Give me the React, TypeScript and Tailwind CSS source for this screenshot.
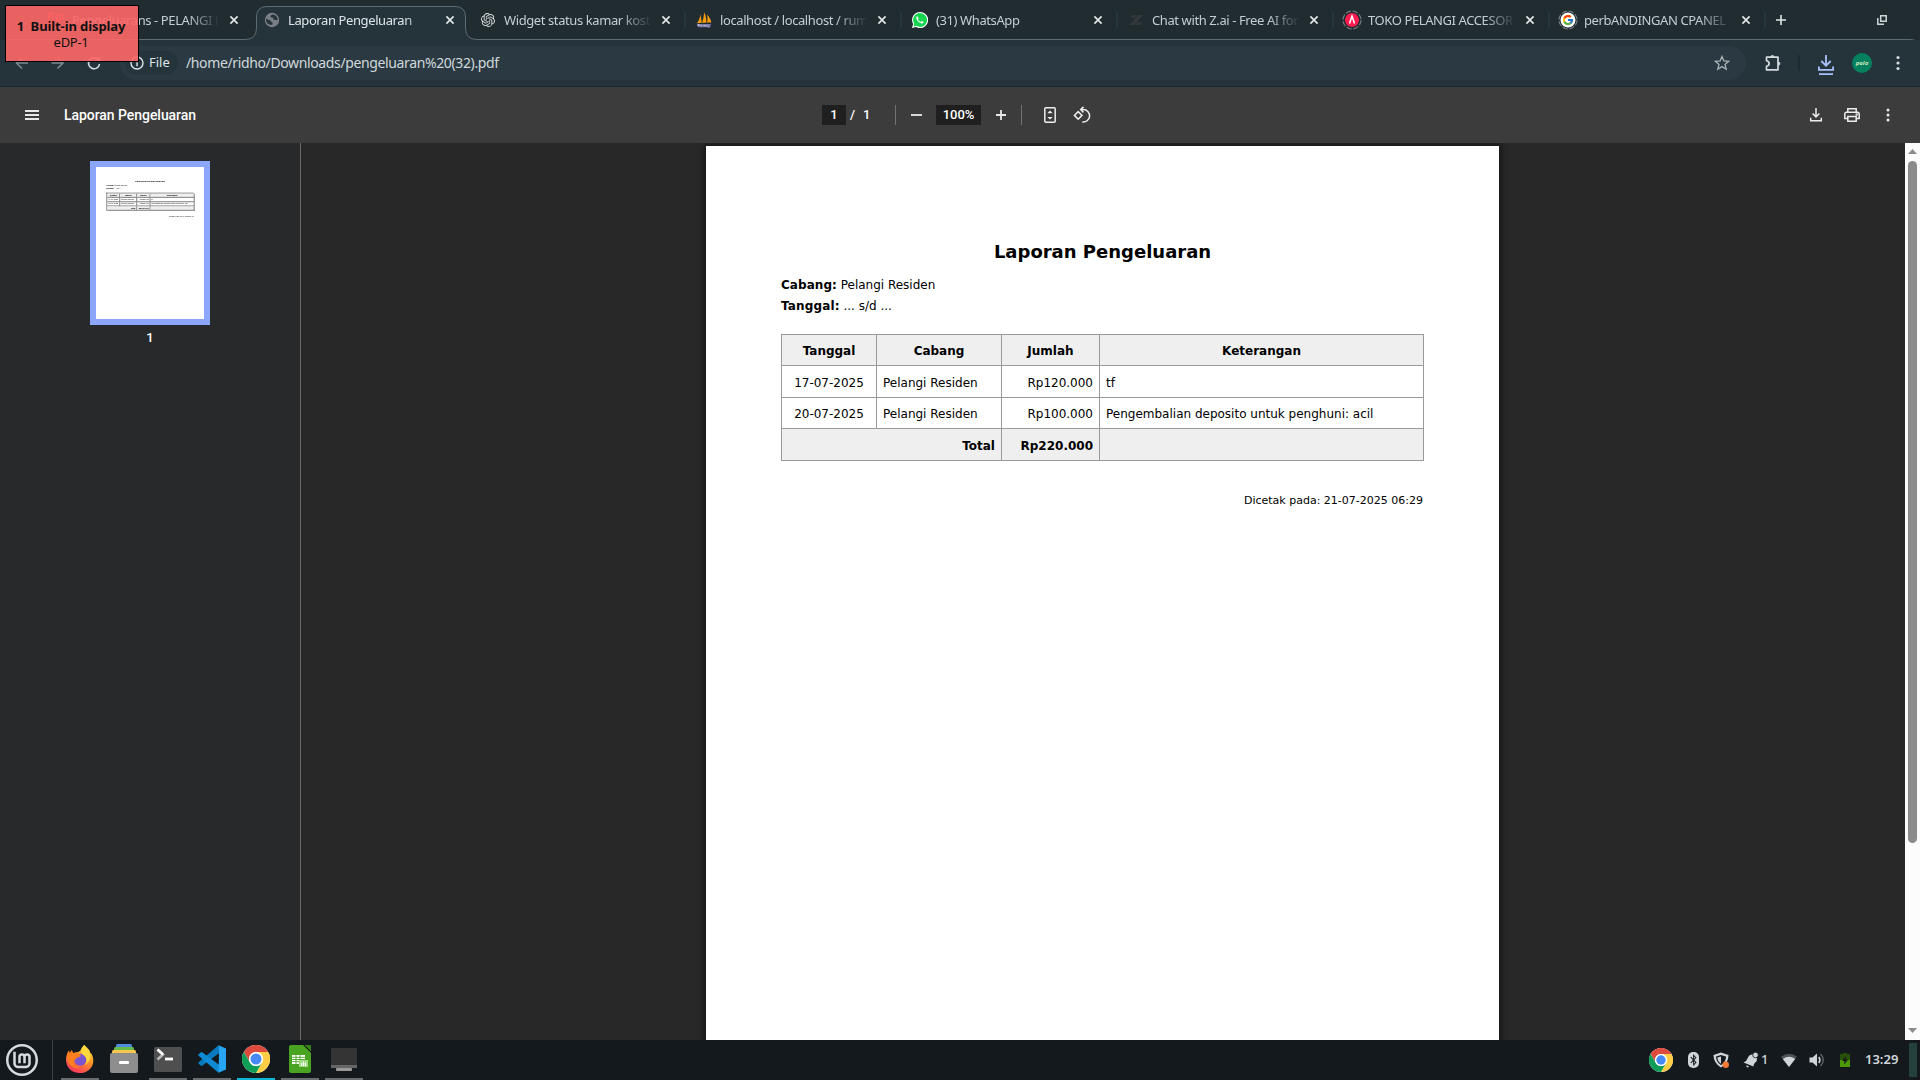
import React from "react";
import { SiLinuxmint, SiOpenai } from "react-icons/si";
import { FcGoogle } from "react-icons/fc";
import { FaBluetoothB } from "react-icons/fa";

type IconProps = { className?: string };

/* ---------- shared drawings ---------- */

function ChromeLogo({ className }: IconProps) {
  return (
    <svg viewBox="0 0 48 48" className={className}>
      <circle cx="24" cy="24" r="24" fill="#fff" />
      <path d="M3.2 12A24 24 0 0 1 44.8 12H24A12 12 0 0 0 13.6 30Z" fill="#dd4b3e" />
      <path d="M44.8 12A24 24 0 0 1 24 48L34.4 30A12 12 0 0 0 24 12Z" fill="#ffce44" />
      <path d="M24 48A24 24 0 0 1 3.2 12L13.6 30A12 12 0 0 0 34.4 30Z" fill="#109d58" />
      <circle cx="24" cy="24" r="12" fill="#fff" />
      <circle cx="24" cy="24" r="9.4" fill="#4688f4" />
    </svg>
  );
}

function CloseIcon({ className }: IconProps) {
  return (
    <svg viewBox="0 0 10 10" className={className} fill="none" stroke="currentColor" strokeWidth="1.7">
      <path d="M1.4 1.4L8.6 8.6M8.6 1.4L1.4 8.6" />
    </svg>
  );
}

/* ---------- tab favicons ---------- */

const GlobeIcon = () => (
  <svg viewBox="0 0 16 16" className="size-4">
    <circle cx="8" cy="8" r="7.2" fill="#7a7f85" />
    <path
      d="M2 6.2C3.4 8 5 7.7 6 8.2s.9 1.7 2 2 .6 1.6.3 2.6C5 13.3 2.300 11 2 8ZM8 2.600c-.4 1-1.700 1-1.500 2.100s1.900.6 2.600 1.200c.7.600 0 1.700 1.100 2.100 1 .4 2-.4 3.300.3C13.900 5 11.600 2.500 8 2.600Z"
      fill="#26343a"
    />
  </svg>
);
const SailIcon = () => (
  <svg viewBox="0 0 16 16" className="size-4">
    <path d="M.8 11.200C2.800 9 4 6 4.400 2.200l1.400 8.600ZM6 10.800C7.400 7 8 4 8 .3c2 3.500 2.400 7 2.300 10.400ZM11 10.600c.7-2.800.6-5.200 0-8 2.200 2 3.900 5 4.300 8Z" fill="#f89c0e" />
    <path d="M.6 12h14.600l-1 3.200H2Z" fill="#6c6a9c" />
    <path d="M2 14V12.600h1.500v.8H2M5 12.400V15M5 13.600h1.500M8 15v-2.300l1 1 1-1V15M12 12.500V15h1.500" stroke="#d9d6ea" strokeWidth=".6" fill="none" />
  </svg>
);
const WhatsAppIcon = () => (
  <svg viewBox="0 0 16 16" className="size-4">
    <path d="M8 0a8 8 0 0 0-6.900 12L0 16l4.100-1.100A8 8 0 1 0 8 0Z" fill="#fff" />
    <path d="M8 1.100a6.900 6.900 0 0 0-5.800 10.600l-.7 2.800 2.900-.7A6.900 6.900 0 1 0 8 1.100Z" fill="#16d54f" />
    <path d="M5.300 4.200c-.9.200-1.200 1.200-1 2 .6 2.400 2.800 4.600 5.200 5.300 1 .2 2-.3 2.200-1.400l-1.900-1-.9 1C7.500 9.500 6.400 8.400 5.900 7.200l.8-.9Z" fill="#fff" />
  </svg>
);
const ZIcon = () => (
  <svg viewBox="0 0 16 16" className="size-4" fill="#34383a">
    <path d="M4 3h5.500L7.500 5.600H2.600ZM10.200 3h5L6.400 13H1.400ZM9.200 10.400h5L12.600 13H7.200Z" />
  </svg>
);
const LoadingRing = () => (
  <circle cx="10" cy="10" r="9" fill="none" stroke="#747d82" strokeWidth="1.200" strokeDasharray="5.500 1.600" />
);
const AntIcon = () => (
  <svg viewBox="0 0 20 20" className="size-5">
    <LoadingRing />
    <circle cx="10" cy="10" r="7" fill="#fb1b50" />
    <path d="M7.500 13.500 10 6l2.500 7.500" fill="none" stroke="#fff" strokeWidth="1.500" />
  </svg>
);
const GoogleIcon = () => (
  <div className="relative size-5">
    <svg viewBox="0 0 20 20" className="size-5">
      <LoadingRing />
      <circle cx="10" cy="10" r="7.500" fill="#fff" />
    </svg>
    <FcGoogle className="absolute top-1 left-1 size-3" />
  </div>
);
const HiddenAppIcon = () => (
  <svg viewBox="0 0 16 16" className="size-4" fill="none" stroke="#ff2d20" strokeWidth="1.500">
    <path d="M1 2v9l5 3 5-3V8l4-2V3l-3-1-3 2v5l-4 2V3L3 1Z" />
  </svg>
);

type Tab = { title: string; icon: React.ReactNode; active?: boolean };

const tabs: Tab[] = [
  { title: "Pengeluarans - PELANGI K", icon: <HiddenAppIcon /> },
  { title: "Laporan Pengeluaran", icon: <GlobeIcon />, active: true },
  { title: "Widget status kamar kost", icon: <SiOpenai className="size-[14px] text-[#d5dadd]" /> },
  { title: "localhost / localhost / rum", icon: <SailIcon /> },
  { title: "(31) WhatsApp", icon: <WhatsAppIcon /> },
  { title: "Chat with Z.ai - Free AI for", icon: <ZIcon /> },
  { title: "TOKO PELANGI ACCESOR", icon: <AntIcon /> },
  { title: "perbANDINGAN CPANEL", icon: <GoogleIcon /> },
];

function TabStrip() {
  return (
    <div className="relative flex h-10 shrink-0 bg-[#212c31] pl-10">
      <svg viewBox="0 0 1920 47" className="absolute top-0 left-0 h-[47px] w-[1920px]">
        <path
          d="M0 47V45.500Q2 39.500 10 39.500H245Q256.500 39.500 256.500 28V17Q256.500 6.500 267 6.500H455Q465.500 6.500 465.500 17V28Q465.500 39.500 477 39.500H1910Q1918 39.500 1920 46V47Z"
          fill="#24343a"
        />
        <path
          d="M0 45.500Q2 39.500 10 39.500H245Q256.500 39.500 256.500 28V17Q256.500 6.500 267 6.500H455Q465.500 6.500 465.500 17V28Q465.500 39.500 477 39.500H1910Q1918 39.500 1920 46"
          fill="none"
          stroke="#5d6b72"
        />
      </svg>
      {tabs.map((tab, i) => (
        <div key={tab.title} className="relative flex h-10 w-[216px] items-center">
          <div className="flex w-8 justify-center">{tab.icon}</div>
          <div
            className={`w-[146px] overflow-hidden text-[13px] leading-5 tracking-[-0.4px] whitespace-nowrap [mask-image:linear-gradient(to_right,black_116px,transparent_148px)] ${tab.active ? "text-[#dfe5e8]" : "text-[#c3cdd2]"}`}
          >
            {tab.title}
          </div>
          <CloseIcon className="ml-[11px] size-[10px] text-[#dfe5e8]" />
          {i > 1 && <div className="absolute top-3 right-[2px] h-4 w-[2px] bg-[#24363e]" />}
        </div>
      ))}
      <svg viewBox="0 0 10 10" className="relative mt-[15px] ml-2 size-[10px]" stroke="#dfe5e8" strokeWidth="1.600">
        <path d="M5 0V10M0 5H10" />
      </svg>
      <svg viewBox="0 0 10 10" className="relative mt-[15px] ml-[91px] size-[10px]" fill="none" stroke="#cdd5d9" strokeWidth="1.500">
        <path d="M3.700 .8H9.200V6.300H3.700ZM.8 3V9.200H7" />
      </svg>
    </div>
  );
}

function AddressBar() {
  return (
    <div className="relative flex h-[47px] shrink-0 items-center border-b border-[#1b282d] bg-[#24343a] [clip-path:inset(0)]">
      <svg viewBox="0 0 110 24" className="h-6 w-[110px]" fill="none" strokeWidth="1.600">
        <path d="M28 12H17M22 6.500 16.500 12 22 17.500" stroke="#7d888d" />
        <path d="M51.500 12H63M57.500 6.500 63 12 57.500 17.500" stroke="#7d888d" />
        <path d="M98.800 9.500A5.500 5.500 0 1 0 99.500 13M99.300 6V10.300H95" stroke="#d4dcdf" />
      </svg>
      <div className="ml-[10px] flex h-[34px] w-[1626px] items-center rounded-full bg-[#2b3a42] pl-[5px]">
        <div className="flex h-6 w-[53px] items-center rounded-full bg-[#24343a] pl-[5px] text-[13px] text-[#dfe5e8]">
          <svg viewBox="0 0 14 14" className="size-[14px]" fill="none" stroke="#dfe5e8" strokeWidth="1.400">
            <circle cx="7" cy="7" r="6" />
            <path d="M7 6.200V10.300M7 3.700V5.100" />
          </svg>
          <span className="ml-[5px]">File</span>
        </div>
        <span className="ml-2 text-sm tracking-[-0.37px] text-[#d0d8dc]">/home/ridho/Downloads/pengeluaran%20(32).pdf</span>
        <svg viewBox="0 0 16 16" className="mr-4 ml-auto size-4" fill="none" stroke="#a9b2b6" strokeWidth="1.300">
          <path d="M8 1.500 9.900 6 14.700 6.300 11 9.400 12.200 14.200 8 11.600 3.800 14.200 5 9.400 1.300 6.300 6.100 6Z" />
        </svg>
      </div>
      <svg viewBox="0 0 18 18" className="ml-[18px] size-[18px]" fill="none" stroke="#d3dbde" strokeWidth="1.700">
        <path d="M2.500 3.200H14V15.800H2.500V12.300Q5.200 11.600 5.200 9.500T2.500 6.700Z" strokeLinejoin="round" />
        <path d="M6.700 2.500a1.700 1.300 0 0 1 3.300 0ZM14.700 8a1.200 1.600 0 0 1 0 3.200Z" fill="#d3dbde" strokeWidth=".8" />
      </svg>
      <div className="ml-4 h-4 w-[2px] bg-[#1d2a30]" />
      <svg viewBox="0 0 18 22" className="mt-1 ml-[17px] h-[22px] w-[18px]" fill="none" stroke="#a8c0fa" strokeWidth="1.800">
        <path d="M9 1V11.500M4.300 7 9 11.700 13.700 7M1.900 12.500V15.800H16.100V12.500M2 20.200H16" />
      </svg>
      <div className="ml-[17px] flex size-5 items-center justify-center rounded-full bg-[#05805f] text-[6px] font-bold text-[#cfe9c0] italic">
        pola
      </div>
      <svg viewBox="0 0 4 16" className="ml-6 h-4 w-1" fill="#d3dbde">
        <circle cx="2" cy="2.500" r="1.600" />
        <circle cx="2" cy="8" r="1.600" />
        <circle cx="2" cy="13.500" r="1.600" />
      </svg>
    </div>
  );
}

function PdfToolbar() {
  return (
    <div className="flex h-14 shrink-0 items-center bg-[#3c3c3c] font-[Roboto,sans-serif] text-[13px] font-medium text-white">
      <div className="flex w-[822px] items-center pl-[25px]">
        <div className="flex w-[14px] flex-col gap-[2px]">
          <div className="h-[2px] bg-[#e8e8e8]" />
          <div className="h-[2px] bg-[#e8e8e8]" />
          <div className="h-[2px] bg-[#e8e8e8]" />
        </div>
        <span className="ml-[25px] text-sm tracking-[-0.05px]">Laporan Pengeluaran</span>
      </div>
      <div className="flex h-5 w-6 items-center justify-center bg-[#1f1f1f]">1</div>
      <span className="ml-1 w-[13px]">/</span>
      <span className="w-[29px]">1</span>
      <div className="ml-[3px] h-5 w-px bg-[#727272]" />
      <div className="ml-[15px] h-[2px] w-[11px] bg-[#d8d8d8]" />
      <div className="ml-[14px] flex h-5 w-[45px] items-center justify-center bg-[#1f1f1f]">100%</div>
      <svg viewBox="0 0 10 10" className="ml-[15px] size-[10px]" stroke="#e8e8e8" strokeWidth="1.800">
        <path d="M5 0V10M0 5H10" />
      </svg>
      <div className="ml-[15px] h-5 w-px bg-[#727272]" />
      <svg viewBox="0 0 12 16" className="ml-[22px] h-4 w-3" fill="none" stroke="#ededed" strokeWidth="1.500">
        <rect x=".8" y=".8" width="10.400" height="14.400" rx="1" />
        <path d="M3.300 6.300 6 3.600l2.700 2.700ZM3.300 9.900 6 12.600l2.700-2.700Z" fill="#ededed" stroke="none" />
      </svg>
      <svg viewBox="0 0 18 18" className="ml-[17px] size-[18px]" fill="none" stroke="#ededed" strokeWidth="1.500">
        <path d="M5.200 5.600 9 9.400 5.200 13.200 1.400 9.400ZM8.500 3.600H10.500A6.200 6.200 0 1 1 9.300 15.900M10.500.8 7.700 3.600 10.500 6.400" />
      </svg>
      <div className="mr-[30px] ml-auto flex items-center">
        <svg viewBox="0 0 14 14" className="size-[14px]" fill="none" stroke="#ededed" strokeWidth="1.500">
          <path d="M7 0V8.700M3.600 5.500 7 8.900 10.400 5.500M1.700 9.800V12.700H12.300V9.800" />
        </svg>
        <svg viewBox="0 0 16 14" className="ml-[21px] h-[14px] w-4" fill="none" stroke="#ededed" strokeWidth="1.500">
          <path d="M3.800 3.800V.8H12.200V3.800M3.500 10.500H.8V6Q.8 4.200 2.600 4.200H13.400Q15.200 4.200 15.200 6V10.500H12.500M3.800 8.500H12.200V13.200H3.800Z" />
          <circle cx="12.700" cy="6.600" r=".5" />
        </svg>
        <svg viewBox="0 0 4 14" className="ml-[26px] h-[14px] w-1" fill="#ededed">
          <circle cx="2" cy="2" r="1.500" />
          <circle cx="2" cy="7" r="1.500" />
          <circle cx="2" cy="12" r="1.500" />
        </svg>
      </div>
    </div>
  );
}

/* ---------- report page ---------- */

const cell = "flex items-center px-[6px]";

function ReportPage({ mini = false }: { mini?: boolean }) {
  const line = mini ? "border-[#8a8a8a] border-r-8 border-b-8" : "border-[#9a9a9a] border-r border-b";
  const edge = mini ? "border-[#8a8a8a] border-t-8 border-l-8" : "border-[#9a9a9a] border-t border-l";
  const plain = `${cell} ${line} pt-px`;
  const low = `${cell} ${line} pt-[3px]`;
  return (
    <div className="h-[1122px] w-[793px] shrink-0 bg-white px-[75px] pt-[94px] font-['DejaVu_Sans',sans-serif] text-xs text-black">
      <h1 className="text-center text-[18px] leading-6 font-bold">Laporan Pengeluaran</h1>
      <div className="mt-[11px] leading-[21px]">
        <div>
          <b className="tracking-[0.05px]">Cabang:</b> Pelangi Residen
        </div>
        <div>
          <b className="tracking-[0.15px]">Tanggal:</b> ... s/d ...
        </div>
      </div>
      <div className={`mt-[17px] grid w-[643px] grid-cols-[95px_125px_98px_324px] grid-rows-[31px_32px_31px_32px] ${edge}`}>
        <div className={`${plain} justify-center bg-[#efefef] font-bold`}>Tanggal</div>
        <div className={`${plain} justify-center bg-[#efefef] font-bold`}>Cabang</div>
        <div className={`${plain} justify-center bg-[#efefef] font-bold`}>Jumlah</div>
        <div className={`${plain} justify-center bg-[#efefef] font-bold`}>Keterangan</div>
        <div className={`${low} justify-center`}>17-07-2025</div>
        <div className={low}>Pelangi Residen</div>
        <div className={`${low} justify-end`}>Rp120.000</div>
        <div className={low}>tf</div>
        <div className={`${plain} justify-center`}>20-07-2025</div>
        <div className={plain}>Pelangi Residen</div>
        <div className={`${plain} justify-end`}>Rp100.000</div>
        <div className={`${plain} whitespace-nowrap`}>Pengembalian deposito untuk penghuni: acil</div>
        <div className={`${low} col-span-2 justify-end bg-[#efefef] font-bold`}>Total</div>
        <div className={`${low} justify-end bg-[#efefef] font-bold`}>Rp220.000</div>
        <div className={`${low} bg-[#efefef]`} />
      </div>
      <div className="mt-[30px] pr-px text-right text-[11px] leading-5">Dicetak pada: 21-07-2025 06:29</div>
    </div>
  );
}

function PdfViewer() {
  return (
    <div className="flex h-[897px] shrink-0 overflow-hidden bg-[#282828]">
      <div className="flex w-[301px] flex-col items-center border-r border-[#6b6b6b] bg-[#28292a] pt-[18px]">
        <div className="h-[164px] w-[120px] overflow-hidden border-[6px] border-[#8ba6fb] bg-white">
          <div className="origin-top-left scale-[0.1362]">
            <ReportPage mini />
          </div>
        </div>
        <span className="mt-[5px] font-[Roboto,sans-serif] text-[13px] leading-4 font-medium text-white">1</span>
      </div>
      <div className="flex h-[897px] w-[1604px] items-start overflow-hidden pt-[3px] pl-[405px]">
        <div className="shadow-[0_0_6px_2px_rgba(0,0,0,0.5)]">
          <ReportPage />
        </div>
      </div>
      <div className="flex w-[15px] flex-col items-center bg-[#fcfcfc]">
        <svg viewBox="0 0 9 5" className="mt-[6px] h-[5px] w-[9px]" fill="#8b8b8b">
          <path d="M0 5H9L4.500 0Z" />
        </svg>
        <div className="mt-[7px] h-[682px] w-[9px] rounded-full bg-[#8b8b8b]" />
        <svg viewBox="0 0 9 5" className="mt-auto mb-[7px] h-[5px] w-[9px]" fill="#8b8b8b">
          <path d="M0 0H9L4.500 5Z" />
        </svg>
      </div>
    </div>
  );
}

/* ---------- taskbar ---------- */

const FirefoxIcon = () => (
  <svg viewBox="0 0 28 28" className="size-7">
    <defs>
      <linearGradient id="ffBody" x1=".8" y1="0" x2=".3" y2="1">
        <stop offset="0" stopColor="#ffe14a" />
        <stop offset=".45" stopColor="#ff9626" />
        <stop offset="1" stopColor="#f5355f" />
      </linearGradient>
    </defs>
    <path d="M18.200 0C22 3 24 5.500 24.400 8c1 .4 1.700 1.500 1.900 2.500C30 20 23 28 14 28S0 22 0 14.500C0 11 1 8 3 5.500l.5 3 2.200-3.200L7 8.200c1.300-.6 3-1 4.500-.9L14 6Z" fill="url(#ffBody)" />
    <circle cx="14.300" cy="14.800" r="6" fill="#7b55cf" />
    <path d="M1 9.500 3 5.500 3.700 8.500 5.800 5 7.200 8.300C9 7.600 11 7.500 12.500 8.500L15 10.500C14 12 12.500 12 11 12.700 9.500 13.500 9.500 15 8.200 15.500 6 20 11 22.500 15 21.500 10 25 1 22 1 9.500Z" fill="#ff7f1f" />
    <path d="M18.200 0C13 4.500 15 8 18 10.500 21 13 21.500 17 19 20 24 17 26 11 22.500 6Z" fill="#ffd83d" />
  </svg>
);
const FilesIcon = () => (
  <svg viewBox="0 0 28 30" className="h-[30px] w-7">
    <rect x="6" y="0" width="16" height="6" rx="1.500" fill="#508bdf" />
    <rect x="4" y="3" width="20" height="6" rx="1.500" fill="#64bb4a" />
    <rect x="2" y="6" width="24" height="6" rx="1.500" fill="#f7c64f" />
    <rect x="0" y="9" width="28" height="20" rx="2" fill="#8e8e8e" />
    <rect x="9" y="17" width="10" height="3" rx="1" fill="#fff" />
  </svg>
);
const TerminalIcon = () => (
  <svg viewBox="0 0 28 26" className="h-[26px] w-7">
    <rect y="1" width="28" height="25" rx="1.500" fill="#4f4f4f" />
    <path d="M3.500 3.500 9 8.500 3.500 13.500" stroke="#bbb" strokeWidth="2.500" fill="none" />
    <path d="M3.500 3.500 9 8.500" stroke="#fff" strokeWidth="2.500" />
    <path d="M11 13H19" stroke="#fff" strokeWidth="2.800" />
  </svg>
);
const CodeIcon = () => (
  <svg viewBox="0 0 28 28" className="size-7">
    <path d="M20.500.300 22 7.500 4.200 20.800Q3.600 21.200 3 20.700L.6 18.700Q0 18 .6 17.300Z" fill="#0a7abf" />
    <path d="M20.500 27.700 22 20.500 4.200 7.200Q3.600 6.800 3 7.300L.6 9.300Q0 10 .6 10.700Z" fill="#0f8ad4" />
    <path d="M20.500.300 28 3.500V24.500L20.500 27.800Q19.800 27 20.600 26.500L21 7.500V2Q20 1 20.500.3Z" fill="#27a4f2" />
  </svg>
);
const CalcIcon = () => (
  <svg viewBox="0 0 22 28" className="h-7 w-[22px]">
    <path d="M2 0H14L22 8V26Q22 28 20 28H2Q0 28 0 26V2Q0 0 2 0Z" fill="#49a422" />
    <path d="M14 0H22V8Z" fill="#357f14" />
    <path d="M15 0 22 7" stroke="#111" strokeWidth="1" />
    <rect x="3" y="10" width="13" height="9" fill="#fff" />
    <path d="M3 12.300H16M3 14.500H16M3 16.700H16M7 10V19M11 10V19" stroke="#49a422" strokeWidth=".9" />
    <rect x="10" y="15" width="9" height="7" fill="#9bdb7b" />
    <path d="M12.500 21V18M14.500 21V16.500M16.500 21V17.500" stroke="#fff" strokeWidth="1.200" />
  </svg>
);
const DesktopIcon = () => (
  <svg viewBox="0 0 26 24" className="mt-[2px] h-6 w-[26px]">
    <rect y="0" width="26" height="18" rx="1" fill="#343434" />
    <rect y="17" width="26" height="3" fill="#666" />
    <rect x="5" y="20" width="16" height="3" rx="1" fill="#999" />
  </svg>
);

const apps: { name: string; icon: React.ReactNode; bar: string }[] = [
  { name: "firefox", icon: <FirefoxIcon />, bar: "bg-[#6a6e70]" },
  { name: "files", icon: <FilesIcon />, bar: "bg-transparent" },
  { name: "terminal", icon: <TerminalIcon />, bar: "bg-[#6a6e70]" },
  { name: "code", icon: <CodeIcon />, bar: "bg-[#6a6e70]" },
  { name: "chrome", icon: <ChromeLogo className="size-7" />, bar: "bg-[#0bb6d6]" },
  { name: "calc", icon: <CalcIcon />, bar: "bg-[#6a6e70]" },
  { name: "desktop", icon: <DesktopIcon />, bar: "bg-[#6a6e70]" },
];

function Taskbar() {
  return (
    <div className="flex h-10 shrink-0 items-center bg-[#14191d]">
      <SiLinuxmint className="ml-[6px] size-8 text-[#d5dbde]" />
      <div className="ml-[14px] h-full w-px bg-[#3a3f42]" />
      <div className="ml-[5px] flex h-full">
        {apps.map((app) => (
          <div key={app.name} className="flex h-full w-11 flex-col items-center">
            <div className="flex h-[38px] items-center">{app.icon}</div>
            <div className={`h-[2px] w-[38px] ${app.bar}`} />
          </div>
        ))}
      </div>
      <div className="ml-auto flex h-full items-center">
        <ChromeLogo className="size-6" />
        <div className="ml-[15px] flex h-4 w-[11px] items-center justify-center rounded-[5px] bg-[#cfd6d9] text-[#14191d]">
          <FaBluetoothB className="size-[12px]" />
        </div>
        <svg viewBox="0 0 16 16" className="ml-[14px] size-4">
          <path d="M8 .5 15.500 3Q15.500 11 8 15.500.5 11 .5 3Z" fill="#cfd6d9" />
          <path d="M8 3 13 4.500Q13 10 8 13.200 3 10 3 4.500Z" fill="#14191d" />
          <path d="M8 4.500 4.400 5.500Q4.600 9.500 8 11.700Z" fill="#cfd6d9" />
          <circle cx="12.800" cy="12.800" r="3.200" fill="#f27835" />
        </svg>
        <svg viewBox="0 0 16 16" className="ml-[14px] size-4" fill="#cfd6d9">
          <path d="M.5 10.500Q4 9 5 5.500 6.500 2 10 2.500L14 6Q14.500 9 12 10.800 10.500 12 10.500 14.500ZM3.500 13 6 14.800Q4.500 16 3.500 14.800Z" />
          <circle cx="12.500" cy="3" r="2.800" stroke="#14191d" strokeWidth=".8" />
        </svg>
        <span className="ml-[2px] w-[11px] text-[13px] font-medium text-[#cfd6d9]">1</span>
        <svg viewBox="0 0 16 14" className="ml-[9px] h-[14px] w-4">
          <path d="M0 3.800Q8-2.500 16 3.800L8 14Z" fill="#4d5457" />
          <path d="M1.800 6Q8 1.500 14.200 6L8 14Z" fill="#cfd6d9" />
        </svg>
        <svg viewBox="0 0 16 14" className="ml-3 h-[14px] w-4" fill="none">
          <path d="M.5 4.500H3.500L8 .5V13.500L3.500 9.500H.5Z" fill="#cfd6d9" />
          <path d="M9.800 4Q12 7 9.800 10" stroke="#cfd6d9" strokeWidth="1.600" />
          <path d="M11.500 1Q17 7 11.500 13" stroke="#5a6265" strokeWidth="1.400" />
        </svg>
        <svg viewBox="0 0 10 14" className="ml-[15px] h-[14px] w-[10px]">
          <path d="M3 0H7V1H10V7H0V1H3Z" fill="#295009" />
          <path d="M0 7H10V14H0Z" fill="#4e9a06" />
          <path d="M6 3 2 8H4.500L4 11.500 8.200 6.500H5.500Z" fill="#14191d" />
        </svg>
        <span className="ml-[15px] w-[35px] text-[13px] font-semibold whitespace-nowrap text-[#cfd6d9]">13:29</span>
        <div className="mr-[3px] ml-[9px] h-[34px] w-2 bg-[#24403f]" />
      </div>
    </div>
  );
}

function DisplayBadge() {
  return (
    <div className="absolute top-[5px] left-[5px] flex h-[57px] w-[134px] flex-col items-center border border-black bg-[#ff6868]/90 pt-[12px] pr-[2px] text-[13px] leading-4 text-[#111]">
      <span className="font-bold tracking-[-0.1px] whitespace-pre">1&nbsp; Built-in display</span>
      <span className="tracking-[-0.3px]">eDP-1</span>
    </div>
  );
}

export default function App() {
  return (
    <div className="relative flex h-[1080px] w-[1920px] flex-col overflow-hidden bg-[#282828] font-['Noto_Sans',sans-serif]">
      <TabStrip />
      <AddressBar />
      <PdfToolbar />
      <PdfViewer />
      <Taskbar />
      <DisplayBadge />
    </div>
  );
}
